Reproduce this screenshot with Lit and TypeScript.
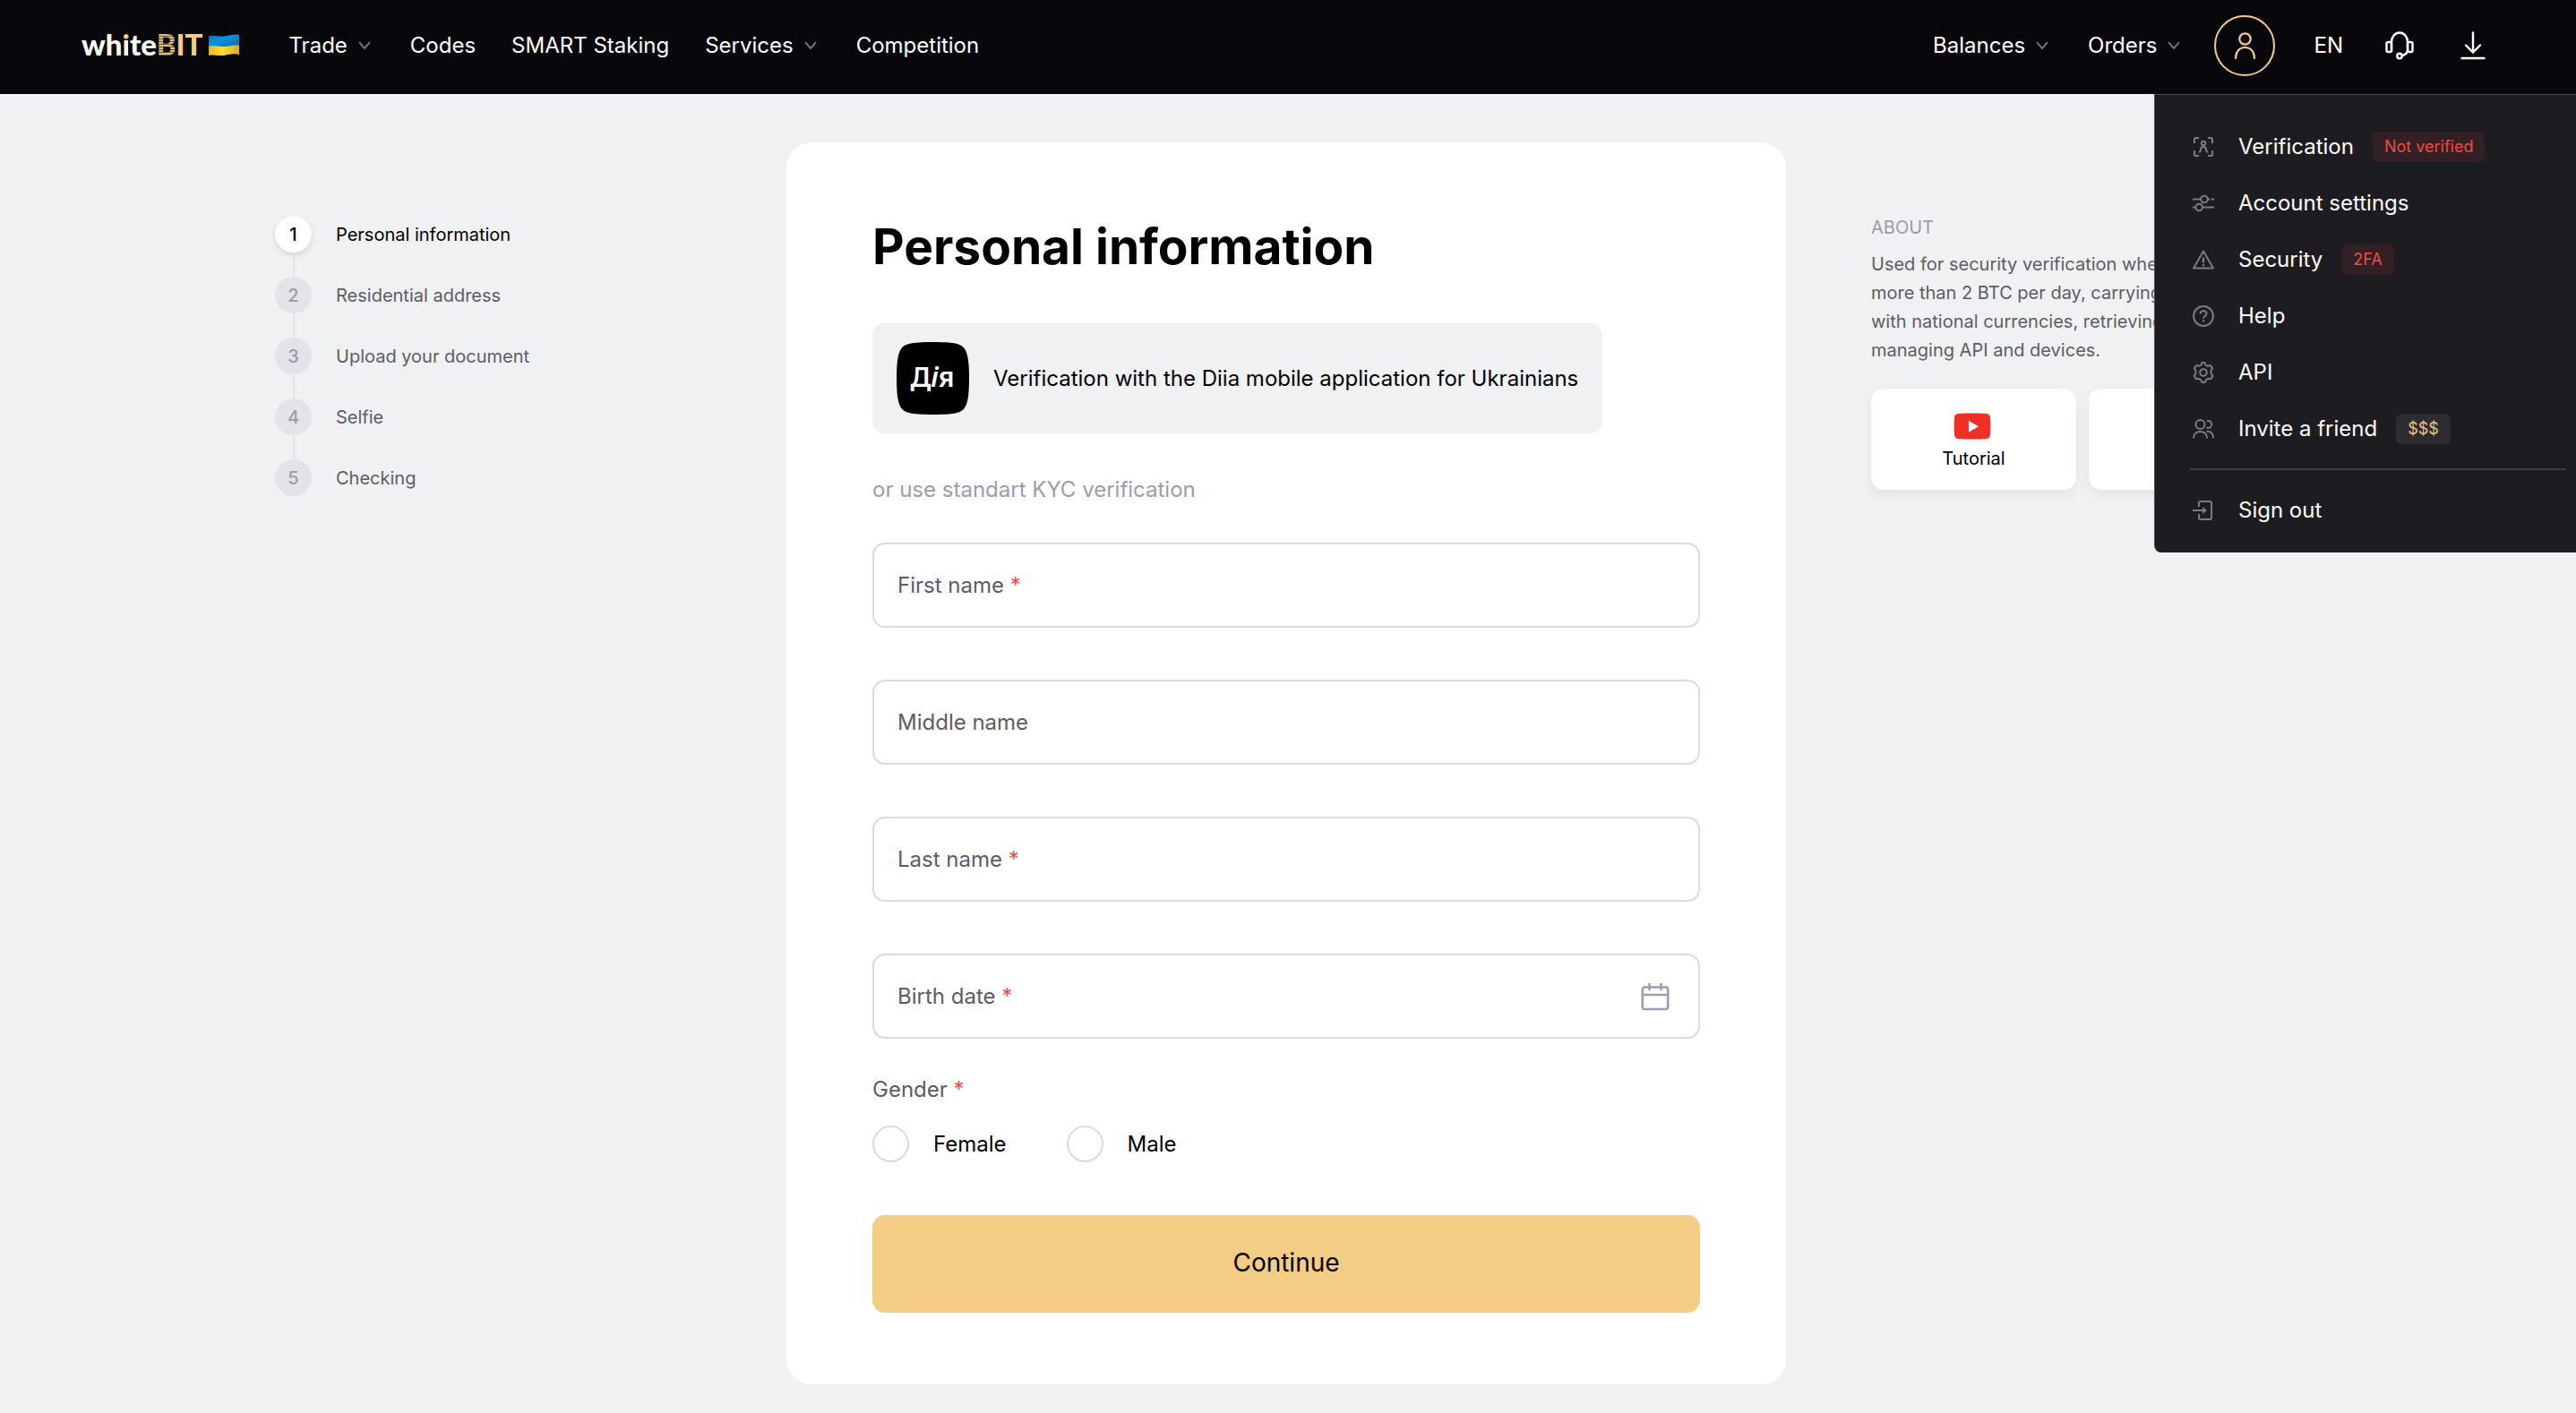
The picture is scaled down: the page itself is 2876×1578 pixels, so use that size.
import { LitElement, html, css, svg, nothing, type TemplateResult } from "lit";
import { customElement, property } from "lit/decorators.js";

const chevron = html`<svg class="chevron" viewBox="0 0 14 10" aria-hidden="true">
  <path d="M1 1.2 7 8l6-6.8" fill="none" stroke="#74747f" stroke-width="2" />
</svg>`;

const menuIcons: Record<string, TemplateResult> = {
  verification: svg`
    <path d="M2 8V3.500A1.500 1.500 0 0 1 3.500 2H7M17 2h3.500A1.500 1.500 0 0 1 22 3.500V8M22 16v4.500a1.500 1.500 0 0 1-1.500 1.500H17M7 22H3.500A1.500 1.500 0 0 1 2 20.500V16" />
    <circle cx="12" cy="8" r="2.200" />
    <path d="M7.500 18.500c0-1.600 1.500-1.800 1.500-3.500 0-1.800 1.300-3 3-3s3 1.200 3 3c0 1.700 1.500 1.900 1.500 3.500" />`,
  settings: svg`
    <path d="M0 7.500h9M17 7.500h2M20.500 7.500H24M0 16.500h3.500M11 16.500h13" />
    <circle cx="13" cy="7.500" r="3.800" /><circle cx="7.200" cy="16.500" r="3.800" />`,
  security: svg`
    <path d="M12 2.500 23 21.500H1Z" stroke-linejoin="round" />
    <path d="M12 9.500v6M12 17v2.200" stroke-width="2.400" />`,
  help: svg`
    <circle cx="12" cy="12" r="10.900" />
    <path d="M8.600 9.600c0-2 1.500-3.300 3.500-3.300s3.400 1.200 3.400 3c0 2.400-3.400 2.600-3.400 5.100M12.100 16v2.400" />`,
  api: svg`
    <circle cx="12" cy="12" r="3.800" />
    <path stroke-linejoin="round" d="M9.700 3.300 10.400 1h3.200l.7 2.300 2.600 1.500 2.900-.7 2.300 3-1.500 2.600v3.600l1.900 2.200-1.900 3.400-3.300-.2-2.400 1.600L13.600 23h-3.200l-1.100-2.700-2.500-1.500-3.200.1-1.900-3.300 1.700-2.300V9.700L1.800 7.100l2.400-3 2.900.7Z" />`,
  invite: svg`
    <circle cx="8.500" cy="7" r="5" />
    <path d="M1 22.500C1 17.800 4.200 15 8.500 15s7.500 2.800 7.500 7.500M15.800 3.200c2.800-.8 5.400.9 5.400 3.700 0 2.900-2.700 4.700-5.500 3.900M15.500 14.800c4.600-.7 7.500 2.700 7.500 7.700" />`,
  signout: svg`
    <path d="M7 8V3.500A1.500 1.500 0 0 1 8.500 2h11A1.500 1.500 0 0 1 21 3.500v17a1.500 1.500 0 0 1-1.500 1.500h-11A1.500 1.500 0 0 1 7 20.500V16M0 12h13" />
    <path d="m11 8 5 4-5 4Z" fill="#7b7b86" stroke="none" />`,
};

interface MenuEntry {
  icon: string;
  label: string;
  badge?: string;
  tone?: "red" | "gold";
}

const accountMenu: MenuEntry[] = [
  { icon: "verification", label: "Verification", badge: "Not verified", tone: "red" },
  { icon: "settings", label: "Account settings" },
  { icon: "security", label: "Security", badge: "2FA", tone: "red" },
  { icon: "help", label: "Help" },
  { icon: "api", label: "API" },
  { icon: "invite", label: "Invite a friend", badge: "$$$", tone: "gold" },
];

@customElement("site-header")
export class SiteHeader extends LitElement {
  static styles = css`
    :host { display: block; position: relative; z-index: 2; }
    * { box-sizing: border-box; }
    .bar {
      display: flex; align-items: center; min-height: 105px;
      padding: 0 101px 4px 91px; background: #08070c; color: #fff; font-size: 24px;
    }
    a, button { color: inherit; font: inherit; text-decoration: none; background: none; border: 0; padding: 0; cursor: pointer; }
    .logo { display: flex; align-items: center; gap: 7px; margin-right: 55px; }
    .word { padding-bottom: 4px; font: 900 33px/44px Lato, "Open Sans", sans-serif; }
    .gold { color: #f4cd85; }
    .dotted {
      color: transparent; background: linear-gradient(#f4cd85 0 36%, #fff 36%);
      -webkit-background-clip: text; background-clip: text;
    }
    .code {
      color: transparent; background: repeating-linear-gradient(#e0bb78 0 2px, #6b5839 2px 3px);
      -webkit-background-clip: text; background-clip: text;
    }
    .flag { width: 34px; height: 24px; margin-bottom: 2px; }
    .nav { display: flex; align-items: center; gap: 40px; line-height: 32px; }
    .nav button { display: flex; align-items: center; gap: 12px; padding-right: 4px; }
    .chevron { width: 14px; height: 10px; }
    .tools { display: flex; align-items: center; margin-left: auto; }
    .tools .account {
      display: grid; place-items: center; width: 68px; height: 68px;
      border: 2px solid #f4cd85; border-radius: 50%; margin: 0 43px 0 34px;
    }
    .account svg { width: 26px; height: 32px; }
    .support { width: 32px; height: 32px; margin: 0 52px 0 47px; }
    .download { width: 28px; height: 32px; }
    .tools svg { display: block; }
    .menu {
      position: absolute; top: 100%; right: 0; width: 471px;
      padding: 26px 11px 16px 39px; background: #1d1c21; color: #fff; font-size: 24px;
      border: solid #4b4b51; border-width: 1px 0 0 1px; border-bottom-left-radius: 8px;
    }
    .entry { display: flex; align-items: center; height: 63px; padding-left: 3px; }
    .entry svg { width: 24px; height: 24px; margin-right: 27px; }
    .badge { font-size: 18px; line-height: 34px; padding: 0 13px; border-radius: 7px; margin-left: 21px; }
    .red { background: #332024; color: #ee4b42; }
    .gold.badge { background: #2d2c31; color: #e9c47f; }
    .rule { border: 0; border-top: 2px solid #3c3b41; margin: 13px 0; }
  `;

  private entry({ icon, label, badge, tone }: MenuEntry) {
    return html`<a class="entry" href="#">
      <svg viewBox="0 0 24 24" fill="none" stroke="#7b7b86" stroke-width="2" aria-hidden="true">${menuIcons[icon]}</svg>
      <span>${label}</span>
      ${badge ? html`<span class="badge ${tone}">${badge}</span>` : nothing}
    </a>`;
  }

  render() {
    return html`
      <header class="bar">
        <a class="logo" href="#" aria-label="whiteBIT">
          <span class="word">wh<span class="dotted">i</span>te<span class="code">B</span><span class="gold">IT</span></span>
          <svg class="flag" viewBox="0 0 34 24" aria-hidden="true">
            <defs>
              <linearGradient id="blue" x2="1" y2="1"><stop offset="0" stop-color="#0b6fb8" /><stop offset=".4" stop-color="#0795df" /><stop offset="1" stop-color="#0b66ab" /></linearGradient>
              <linearGradient id="yellow"><stop offset="0" stop-color="#eeb91c" /><stop offset=".45" stop-color="#ffdc33" /><stop offset="1" stop-color="#d3ad24" /></linearGradient>
            </defs>
            <path fill="url(#blue)" d="M0 2.500C6 .5 11 3 17 2.500S28-.5 34 1v12c-6-1.500-11 1.500-17 1.500S6 12.500 0 14Z" />
            <path fill="url(#yellow)" d="M0 13.500c6-1.500 11 .5 17 .5s11-2.500 17-1.500V23c-6-2-11 0-17 1S6 22.500 0 24Z" />
          </svg>
        </a>
        <nav class="nav" aria-label="Main">
          <button type="button">Trade ${chevron}</button>
          <a href="#">Codes</a>
          <a href="#">SMART Staking</a>
          <button type="button">Services ${chevron}</button>
          <a href="#">Competition</a>
        </nav>
        <div class="tools">
          <div class="nav">
            <button type="button">Balances ${chevron}</button>
            <button type="button">Orders ${chevron}</button>
          </div>
          <button class="account" type="button" aria-label="Account" aria-expanded="true">
            <svg viewBox="0 0 26 32" fill="none" stroke="#f4cd85" stroke-width="2.200" stroke-linecap="round">
              <circle cx="13.500" cy="8.500" r="6.200" /><path d="M3 30c0-7 4-12 10.500-12S24 23 24 30" />
            </svg>
          </button>
          <button type="button">EN</button>
          <button class="support" type="button" aria-label="Support">
            <svg viewBox="0 0 32 32" width="32" height="32" fill="none" stroke="#fff" stroke-width="2.400">
              <path d="M7 23V12c0-6 4-10.500 9-10.500S25 6 25 12v11" />
              <rect x="1.500" y="12" width="5.500" height="11" rx="1.800" /><rect x="25" y="12" width="5.500" height="11" rx="1.800" />
              <circle cx="16" cy="27.500" r="2.700" /><path d="M18.700 27c3.500-.6 5.300-2 6.300-5" />
            </svg>
          </button>
          <button class="download" type="button" aria-label="Download">
            <svg viewBox="0 0 28 32" width="28" height="32" fill="none" stroke="#fff" stroke-width="2.400" stroke-linecap="round">
              <path d="M14 1.500V23M6 15.500l8 8 8-8" /><path d="M1.500 30h25" />
            </svg>
          </button>
        </div>
      </header>
      <nav class="menu" aria-label="Account">
        ${accountMenu.map((item) => this.entry(item))}
        <hr class="rule" />
        ${this.entry({ icon: "signout", label: "Sign out" })}
      </nav>`;
  }
}

@customElement("step-list")
export class StepList extends LitElement {
  @property({ type: Number }) current = 1;

  private steps = ["Personal information", "Residential address", "Upload your document", "Selfie", "Checking"];

  static styles = css`
    :host { display: block; }
    .list { list-style: none; margin: 0; padding: 0; font-size: 20px; line-height: 26px; color: #5c5c68; }
    .step { display: grid; grid-template-columns: 41px 1fr; grid-template-rows: 41px 27px; column-gap: 27px; align-items: center; }
    .number {
      display: grid; place-items: center; width: 41px; height: 41px; border-radius: 50%;
      background: #e3e3e8; color: #9c9cad; font-weight: 500;
    }
    .step:not(:last-child)::after {
      content: ""; grid-row: 2; justify-self: center; width: 2px; height: 27px; background: #e3e3e8;
    }
    .current { color: #000; }
    .current .number { background: #fff; color: #000; box-shadow: 0 3px 6px rgb(20 20 40 / 12%); }
  `;

  render() {
    return html`<ol class="list">
      ${this.steps.map((name, i) => html`
        <li class="step ${i + 1 === this.current ? "current" : ""}">
          <span class="number">${i + 1}</span><span>${name}</span>
        </li>`)}
    </ol>`;
  }
}

@customElement("kyc-form")
export class KycForm extends LitElement {
  static styles = css`
    :host { display: block; }
    * { box-sizing: border-box; }
    .card { background: #fff; border-radius: 28px; padding: 83px 96px 80px; font-size: 24px; line-height: 32px; color: #000; }
    .title { margin: 0 0 53px; font-size: 55px; line-height: 66px; font-weight: 700; }
    .diia {
      display: inline-flex; align-items: center; gap: 27px; min-height: 123px; padding: 20px 27px;
      border-radius: 14px; background: #f0f1f3; color: #000; text-decoration: none;
    }
    .diia svg { width: 81px; height: 81px; flex: none; }
    .mark { font: 600 30px "Noto Sans", sans-serif; }
    .slant { font-style: italic; }
    .alt { margin: 47px 0 43px; color: #9c9cad; }
    .fields { display: grid; gap: 58px; }
    .field {
      display: grid; grid-template-columns: 1fr auto; align-items: center; height: 95px;
      border: 2px solid #d8dbe0; border-radius: 14px; color: #5c5c68;
    }
    .field label { grid-area: 1 / 1; padding-left: 26px; pointer-events: none; }
    .field input {
      grid-area: 1 / 1 / 2 / 3; width: 100%; height: 100%; padding: 0 26px; border: 0; border-radius: 12px;
      background: transparent; font: inherit; outline-offset: 0;
    }
    .calendar { grid-area: 1 / 2; display: block; margin-right: 32px; padding: 0; border: 0; background: none; line-height: 0; cursor: pointer; }
    .required { color: #ee4b42; }
    .gender { margin: 41px 0 0; padding: 0; border: 0; color: #5c5c68; }
    .gender legend { padding: 0; margin-bottom: 24px; }
    .options { display: flex; gap: 67px; color: #000; }
    .option { display: flex; align-items: center; gap: 27px; cursor: pointer; }
    .option input {
      appearance: none; width: 41px; height: 41px; margin: 0; border: 2px solid #d8dbe0; border-radius: 50%; background: #fff;
    }
    .option input:checked { border: 12px solid #f4cd85; }
    .submit {
      display: block; width: 100%; height: 109px; margin-top: 59px; padding: 0 0 3px; border: 0; border-radius: 14px;
      background: #f4cd85; color: #000; font: inherit; font-size: 28px; cursor: pointer;
    }
  `;

  private star = html`<span class="required">*</span>`;

  private field(id: string, label: string, required: boolean, extra: unknown = nothing) {
    return html`<div class="field">
      <input id=${id} name=${id} type="text" ?required=${required} />
      <label for=${id}>${label} ${required ? this.star : nothing}</label>
      ${extra}
    </div>`;
  }

  render() {
    const calendar = html`<button class="calendar" type="button" aria-label="Choose date">
      <svg viewBox="0 0 32 32" width="32" height="32" fill="none" stroke="#9c9cb4" stroke-width="2.600" stroke-linecap="round">
        <rect x="1.800" y="5.500" width="28.400" height="24.500" rx="2.500" /><path d="M2 14h28M9.500 2v6M22.500 2v6" />
      </svg>
    </button>`;
    return html`<form class="card">
      <h1 class="title">Personal information</h1>
      <a class="diia" href="#">
        <svg viewBox="0 0 81 81" aria-label="Дія" role="img">
          <path d="M40.500 0C70 0 74 3 77.500 10.500 80 16 81 26 81 40.500S80 65 77.500 70.500C74 78 70 81 40.500 81S7 78 3.500 70.500C1 65 0 55 0 40.500S1 16 3.500 10.500C7 3 11 0 40.500 0Z" />
          <text class="mark" x="40" y="50" text-anchor="middle" fill="#fff">Д<tspan class="slant">і</tspan>я</text>
        </svg>
        <span>Verification with the Diia mobile application for Ukrainians</span>
      </a>
      <p class="alt">or use standart KYC verification</p>
      <div class="fields">
        ${this.field("first-name", "First name", true)}
        ${this.field("middle-name", "Middle name", false)}
        ${this.field("last-name", "Last name", true)}
        ${this.field("birth-date", "Birth date", true, calendar)}
      </div>
      <fieldset class="gender">
        <legend>Gender ${this.star}</legend>
        <div class="options">
          <label class="option"><input type="radio" name="gender" value="female" />Female</label>
          <label class="option"><input type="radio" name="gender" value="male" />Male</label>
        </div>
      </fieldset>
      <button class="submit" type="submit">Continue</button>
    </form>`;
  }
}

@customElement("about-panel")
export class AboutPanel extends LitElement {
  static styles = css`
    :host { display: block; font-size: 20px; line-height: 32px; color: #5c5c68; }
    .heading { margin: 0; font: inherit; color: #9c9cad; }
    .text { margin: 9px 0 27px; }
    .cards { display: grid; grid-template-columns: 1fr 1fr; gap: 14px; }
    .card {
      box-sizing: border-box; display: flex; flex-direction: column; align-items: center; justify-content: center;
      gap: 5px; height: 113px; padding-top: 8px;
      border-radius: 14px; background: #fff; color: #000; text-decoration: none; box-shadow: 0 6px 14px rgb(20 20 40 / 6%);
    }
    .card svg { width: 46px; height: 30px; }
  `;

  render() {
    return html`
      <h2 class="heading">ABOUT</h2>
      <p class="text">
        Used for security verification when<br />more than 2 BTC per day, carrying<br />with
        national currencies, retrieving<br />managing API and devices.
      </p>
      <div class="cards">
        <a class="card" href="#">
          <svg viewBox="0 0 46 30" aria-hidden="true">
            <path fill="#ee3124" d="M21 .5c8 0 12 .2 16 .6 2.400.3 3.600 1.500 3.900 4 .6 6 .6 14 0 20-.3 2.500-1.500 3.500-3.900 3.800-8 .8-24 .8-32 0-2.400-.3-3.600-1.300-3.900-3.800-.6-6-.6-14 0-20C1.400 2.600 2.600 1.400 5 1.100 9 .7 13 .5 21 .5Z" />
            <path fill="#fff" d="m17 9 11 6.300L17 21.500Z" />
          </svg>
          Tutorial
        </a>
        <a class="card" href="#" aria-label="More"></a>
      </div>`;
  }
}

@customElement("app-root")
export class AppRoot extends LitElement {
  static styles = css`
    :host {
      display: block; min-height: 100vh; background: #f0f1f3;
      font-family: Inter, "Liberation Sans", sans-serif; font-optical-sizing: none;
    }
    .layout {
      display: grid; align-items: start; column-gap: 95px;
      grid-template-columns: minmax(0, 476fr) minmax(0, 1116fr) minmax(0, 472fr);
      padding: 54px 315px 32px 307px;
    }
    .steps { margin-top: 82px; }
    .about { margin-top: 79px; }
  `;

  render() {
    return html`
      <site-header></site-header>
      <main class="layout">
        <step-list class="steps"></step-list>
        <kyc-form></kyc-form>
        <about-panel class="about"></about-panel>
      </main>`;
  }
}
